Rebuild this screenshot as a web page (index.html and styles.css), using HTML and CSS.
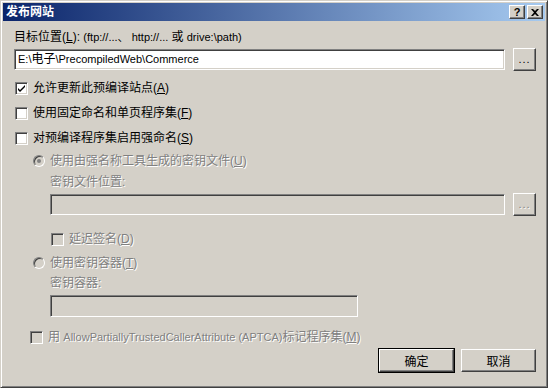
FILE: index.html
```html
<!DOCTYPE html>
<html lang="zh-CN">
<head>
    <meta charset="UTF-8">
    <title>发布网站</title>
    <link rel="stylesheet" href="styles.css">
</head>
<body>
    <div class="window">
        <div class="titlebar">
            <span class="title">发布网站</span>
            <div class="caption-buttons">
                <span class="cap-btn help">?</span>
                <span class="cap-btn close">
                    <svg width="8" height="7" viewBox="0 0 8 7"><path d="M0 0h2l2 2 2-2h2L5 3.5 8 7H6L4 5 2 7H0l3-3.5z" fill="#000"/></svg>
                </span>
            </div>
        </div>

        <div class="content">
            <div class="line">目标位置(<u>L</u>): <span class="en">(ftp://...、 http://... </span>或 <span class="en">drive:\path)</span></div>
            <div class="field-row">
                <div class="input"><span class="en">E:\</span>电子<span class="en">\PrecompiledWeb\Commerce</span></div>
                <button class="browse">...</button>
            </div>

            <label class="check-row row-first"><span class="checkbox checked"><svg width="7" height="7" viewBox="0 0 7 7"><path d="M0 2l2 2 5-5v2L2 6 0 4z" fill="#000" transform="translate(0 1)"/></svg></span><span>允许更新此预编译站点(<u>A</u>)</span></label>
            <label class="check-row"><span class="checkbox"></span><span>使用固定命名和单页程序集(<u>F</u>)</span></label>
            <label class="check-row"><span class="checkbox"></span><span>对预编译程序集启用强命名(<u>S</u>)</span></label>

            <div class="strong-name disabled">
                <div class="radio-row row-radio1"><span class="radio on"></span><span>使用由强名称工具生成的密钥文件(<u>U</u>)</span></div>
                <div class="sub">
                    <div class="line row-label">密钥文件位置:</div>
                    <div class="field-row">
                        <div class="input off"></div>
                        <button class="browse off">...</button>
                    </div>
                    <div class="check-row row-delay"><span class="checkbox off"></span><span>延迟签名(<u>D</u>)</span></div>
                </div>
                <div class="radio-row row-radio2"><span class="radio"></span><span>使用密钥容器(<u>T</u>)</span></div>
                <div class="sub">
                    <div class="line row-label2">密钥容器:</div>
                    <div class="input off short"></div>
                </div>
                <div class="check-row row-aptca"><span class="checkbox off"></span><span>用 <span class="en">AllowPartiallyTrustedCallerAttribute (APTCA)</span>标记程序集(<u>M</u>)</span></div>
            </div>

            <div class="actions">
                <button class="btn default">确定</button>
                <button class="btn">取消</button>
            </div>
        </div>
    </div>
</body>
</html>
```

FILE: styles.css
```css
body {
    margin: 0;
    background: #d4d0c8;
    font-family: "Liberation Sans", "Noto Sans CJK SC", sans-serif;
    font-size: 12px;
    color: #000;
}
.window {
    width: 548px;
    height: 388px;
    box-sizing: border-box;
    background: #d4d0c8;
    border: 1px solid;
    border-color: #d4d0c8 #404040 #404040 #d4d0c8;
    box-shadow: inset 1px 1px 0 #fff, inset -1px -1px 0 #808080;
    padding: 2px;
}
.titlebar {
    height: 18px;
    display: flex;
    align-items: center;
    justify-content: space-between;
    padding: 0 2px 0 3px;
    background: linear-gradient(to right, #0a246a, #a6caf0);
}
.title {
    color: #fff;
    font-weight: bold;
    font-size: 12px;
    line-height: 18px;
}
.caption-buttons {
    display: flex;
    gap: 2px;
}
.cap-btn {
    width: 16px;
    height: 14px;
    box-sizing: border-box;
    display: flex;
    align-items: center;
    justify-content: center;
    background: #d4d0c8;
    border: 1px solid;
    border-color: #fff #404040 #404040 #fff;
    box-shadow: inset -1px -1px 0 #808080;
    font-weight: bold;
    font-size: 11px;
    line-height: 1;
}
.content {
    padding: 9px 9px 0 11px;
}
.en {
    font-size: 11px;
}
.line {
    height: 14px;
    line-height: 14px;
}
u {
    text-decoration: underline;
}
.field-row {
    display: flex;
    align-items: center;
    gap: 8px;
    margin-top: 4px;
    height: 23px;
}
.input {
    flex: 1;
    height: 21px;
    box-sizing: border-box;
    background: #fff;
    border: 1px solid;
    border-color: #808080 #fff #fff #808080;
    box-shadow: inset 1px 1px 0 #404040, inset -1px -1px 0 #d4d0c8;
    padding: 0 3px;
    line-height: 19px;
    white-space: nowrap;
}
.input.off {
    background: #d4d0c8;
}
.input.short {
    flex: none;
    width: 308px;
    height: 22px;
    margin-top: 5px;
}
.browse, .btn {
    font-family: inherit;
    font-size: 12px;
    background: #d4d0c8;
    border: 1px solid;
    border-color: #fff #404040 #404040 #fff;
    box-shadow: inset -1px -1px 0 #808080;
    padding: 0;
    color: #000;
}
.browse {
    width: 23px;
    height: 23px;
    font-size: 11px;
    line-height: 1;
    letter-spacing: 1px;
}
.browse.off {
    color: #808080;
    text-shadow: 1px 1px 0 #fff;
}
.check-row, .radio-row {
    display: flex;
    align-items: center;
    height: 14px;
    line-height: 14px;
    margin-top: 11px;
}
.row-first {
    margin-top: 10px;
}
.checkbox {
    width: 13px;
    height: 13px;
    box-sizing: border-box;
    margin: 0 5px 0 1px;
    background: #fff;
    border: 1px solid;
    border-color: #808080 #fff #fff #808080;
    box-shadow: inset 1px 1px 0 #404040, inset -1px -1px 0 #d4d0c8;
    display: flex;
    align-items: center;
    justify-content: center;
    flex: none;
}
.checkbox.off {
    background: #d4d0c8;
}
.disabled {
    color: #808080;
    text-shadow: 1px 1px 0 #fff;
}
.strong-name {
    padding-left: 19px;
}
.radio {
    width: 12px;
    height: 12px;
    box-sizing: border-box;
    border-radius: 50%;
    margin-right: 5px;
    border: 1px solid;
    border-color: #808080 #fff #fff #808080;
    box-shadow: inset 1px 1px 0 #404040, inset -1px -1px 0 #d4d0c8;
    background: #d4d0c8;
    display: flex;
    align-items: center;
    justify-content: center;
    flex: none;
}
.radio.on::after {
    content: "";
    width: 4px;
    height: 4px;
    border-radius: 50%;
    background: #808080;
}
.row-radio1 {
    margin-top: 9px;
}
.sub {
    padding-left: 17px;
}
.row-label {
    margin-top: 7px;
}
.row-delay {
    margin-top: 16px;
}
.row-radio2 {
    margin-top: 10px;
}
.row-label2 {
    margin-top: 6px;
}
.row-aptca {
    margin-top: 13px;
    margin-left: -4px;
}
.actions {
    display: flex;
    justify-content: flex-end;
    gap: 7px;
    margin-top: 5px;
}
.btn {
    width: 75px;
    height: 23px;
}
.btn.default {
    outline: 1px solid #000;
    outline-offset: 0;
    border-color: #fff #404040 #404040 #fff;
}
```
